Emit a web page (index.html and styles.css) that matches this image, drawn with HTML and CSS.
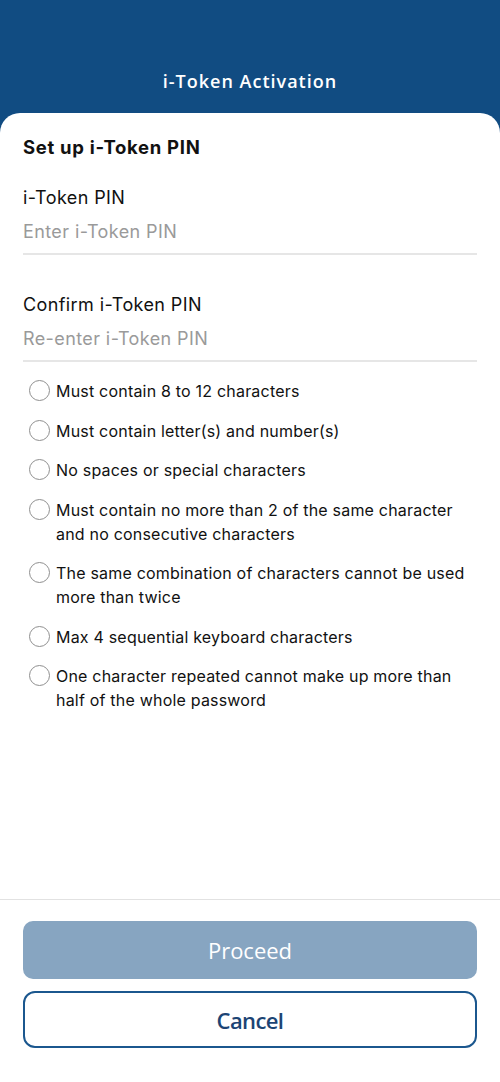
FILE: index.html
```html
<!DOCTYPE html>
<html lang="en">
<head>
    <meta charset="UTF-8">
    <meta name="viewport" content="width=device-width, initial-scale=1.0">
    <title>i-Token Activation</title>
    <link rel="stylesheet" href="styles.css">
</head>
<body>
    <div class="app">
        <header class="topbar">
            <h1 class="topbar-title">i-Token Activation</h1>
        </header>

        <main class="sheet">
            <section class="form-area">
                <h2 class="section-title">Set up i-Token PIN</h2>

                <div class="field">
                    <label class="field-label" for="pin">i-Token PIN</label>
                    <input class="field-input" type="password" id="pin" placeholder="Enter i-Token PIN">
                </div>

                <div class="field field-second">
                    <label class="field-label" for="pin2">Confirm i-Token PIN</label>
                    <input class="field-input" type="password" id="pin2" placeholder="Re-enter i-Token PIN">
                </div>

                <!-- Правила для PIN -->
                <ul class="rules">
                    <li class="rule"><span class="dot"></span><span>Must contain 8 to 12 characters</span></li>
                    <li class="rule"><span class="dot"></span><span>Must contain letter(s) and number(s)</span></li>
                    <li class="rule"><span class="dot"></span><span>No spaces or special characters</span></li>
                    <li class="rule"><span class="dot"></span><span>Must contain no more than 2 of the same character and no consecutive characters</span></li>
                    <li class="rule"><span class="dot"></span><span>The same combination of characters cannot be used more than twice</span></li>
                    <li class="rule"><span class="dot"></span><span>Max 4 sequential keyboard characters</span></li>
                    <li class="rule"><span class="dot"></span><span>One character repeated cannot make up more than half of the whole password</span></li>
                </ul>
            </section>

            <footer class="actions">
                <button class="btn btn-primary" disabled>Proceed</button>
                <button class="btn btn-outline">Cancel</button>
            </footer>
        </main>
    </div>
</body>
</html>
```

FILE: styles.css
```css
* {
    box-sizing: border-box;
}
html, body {
    margin: 0;
    height: 100%;
}
body {
    font-family: Inter, "Noto Sans", sans-serif;
    color: #111;
    background: #114c82;
}
.app {
    display: flex;
    flex-direction: column;
    height: 1082px;
}
.topbar {
    height: 113px;
    padding-top: 68px;
    text-align: center;
}
.topbar-title {
    margin: 0;
    font-family: "Open Sans", sans-serif;
    font-size: 18px;
    font-weight: 600;
    line-height: 26px;
    letter-spacing: 1px;
    color: #fff;
}
.sheet {
    flex: 1;
    display: flex;
    flex-direction: column;
    background: #fff;
    border-radius: 20px 20px 0 0;
}
.form-area {
    flex: 1;
    padding: 0 23px;
}
.section-title {
    margin: 22px 0 0;
    font-size: 18.5px;
    font-weight: 700;
    line-height: 24px;
    letter-spacing: 0.7px;
}
.field {
    margin-top: 27px;
    border-bottom: 2px solid #e6e6e6;
    padding-bottom: 9px;
}
.field-second {
    margin-top: 38px;
}
.field-label {
    display: block;
    font-size: 18px;
    line-height: 24px;
    letter-spacing: 0.4px;
}
.field-input {
    display: block;
    width: 100%;
    margin-top: 10px;
    padding: 0;
    border: none;
    outline: none;
    font-family: inherit;
    font-size: 18px;
    letter-spacing: 0.4px;
    line-height: 24px;
    height: 24px;
    color: #111;
}
.field-input::placeholder {
    color: #9a9a9a;
}
.rules {
    list-style: none;
    margin: 17px 0 0;
    padding: 0;
    display: flex;
    flex-direction: column;
    gap: 15.5px;
}
.rule {
    display: flex;
    align-items: flex-start;
    gap: 6px;
    font-size: 16px;
    letter-spacing: 0.2px;
    line-height: 24px;
}
.dot {
    flex: none;
    width: 21px;
    height: 21px;
    margin: 1px 0 0 6px;
    border: 1.5px solid #8f8f8f;
    border-radius: 50%;
}
.actions {
    border-top: 1px solid #e2e2e2;
    padding: 21px 23px 34px;
    display: flex;
    flex-direction: column;
    gap: 12px;
}
.btn {
    width: 100%;
    font-family: "Open Sans", sans-serif;
    font-size: 22px;
    cursor: pointer;
}
.btn-primary {
    height: 58px;
    border: none;
    border-radius: 10px;
    background: #87a5c1;
    color: #fff;
}
.btn-outline {
    height: 57px;
    border: 2px solid #1b578e;
    border-radius: 12px;
    background: #fff;
    color: #1c4474;
    font-weight: 600;
    letter-spacing: -0.6px;
}
```
